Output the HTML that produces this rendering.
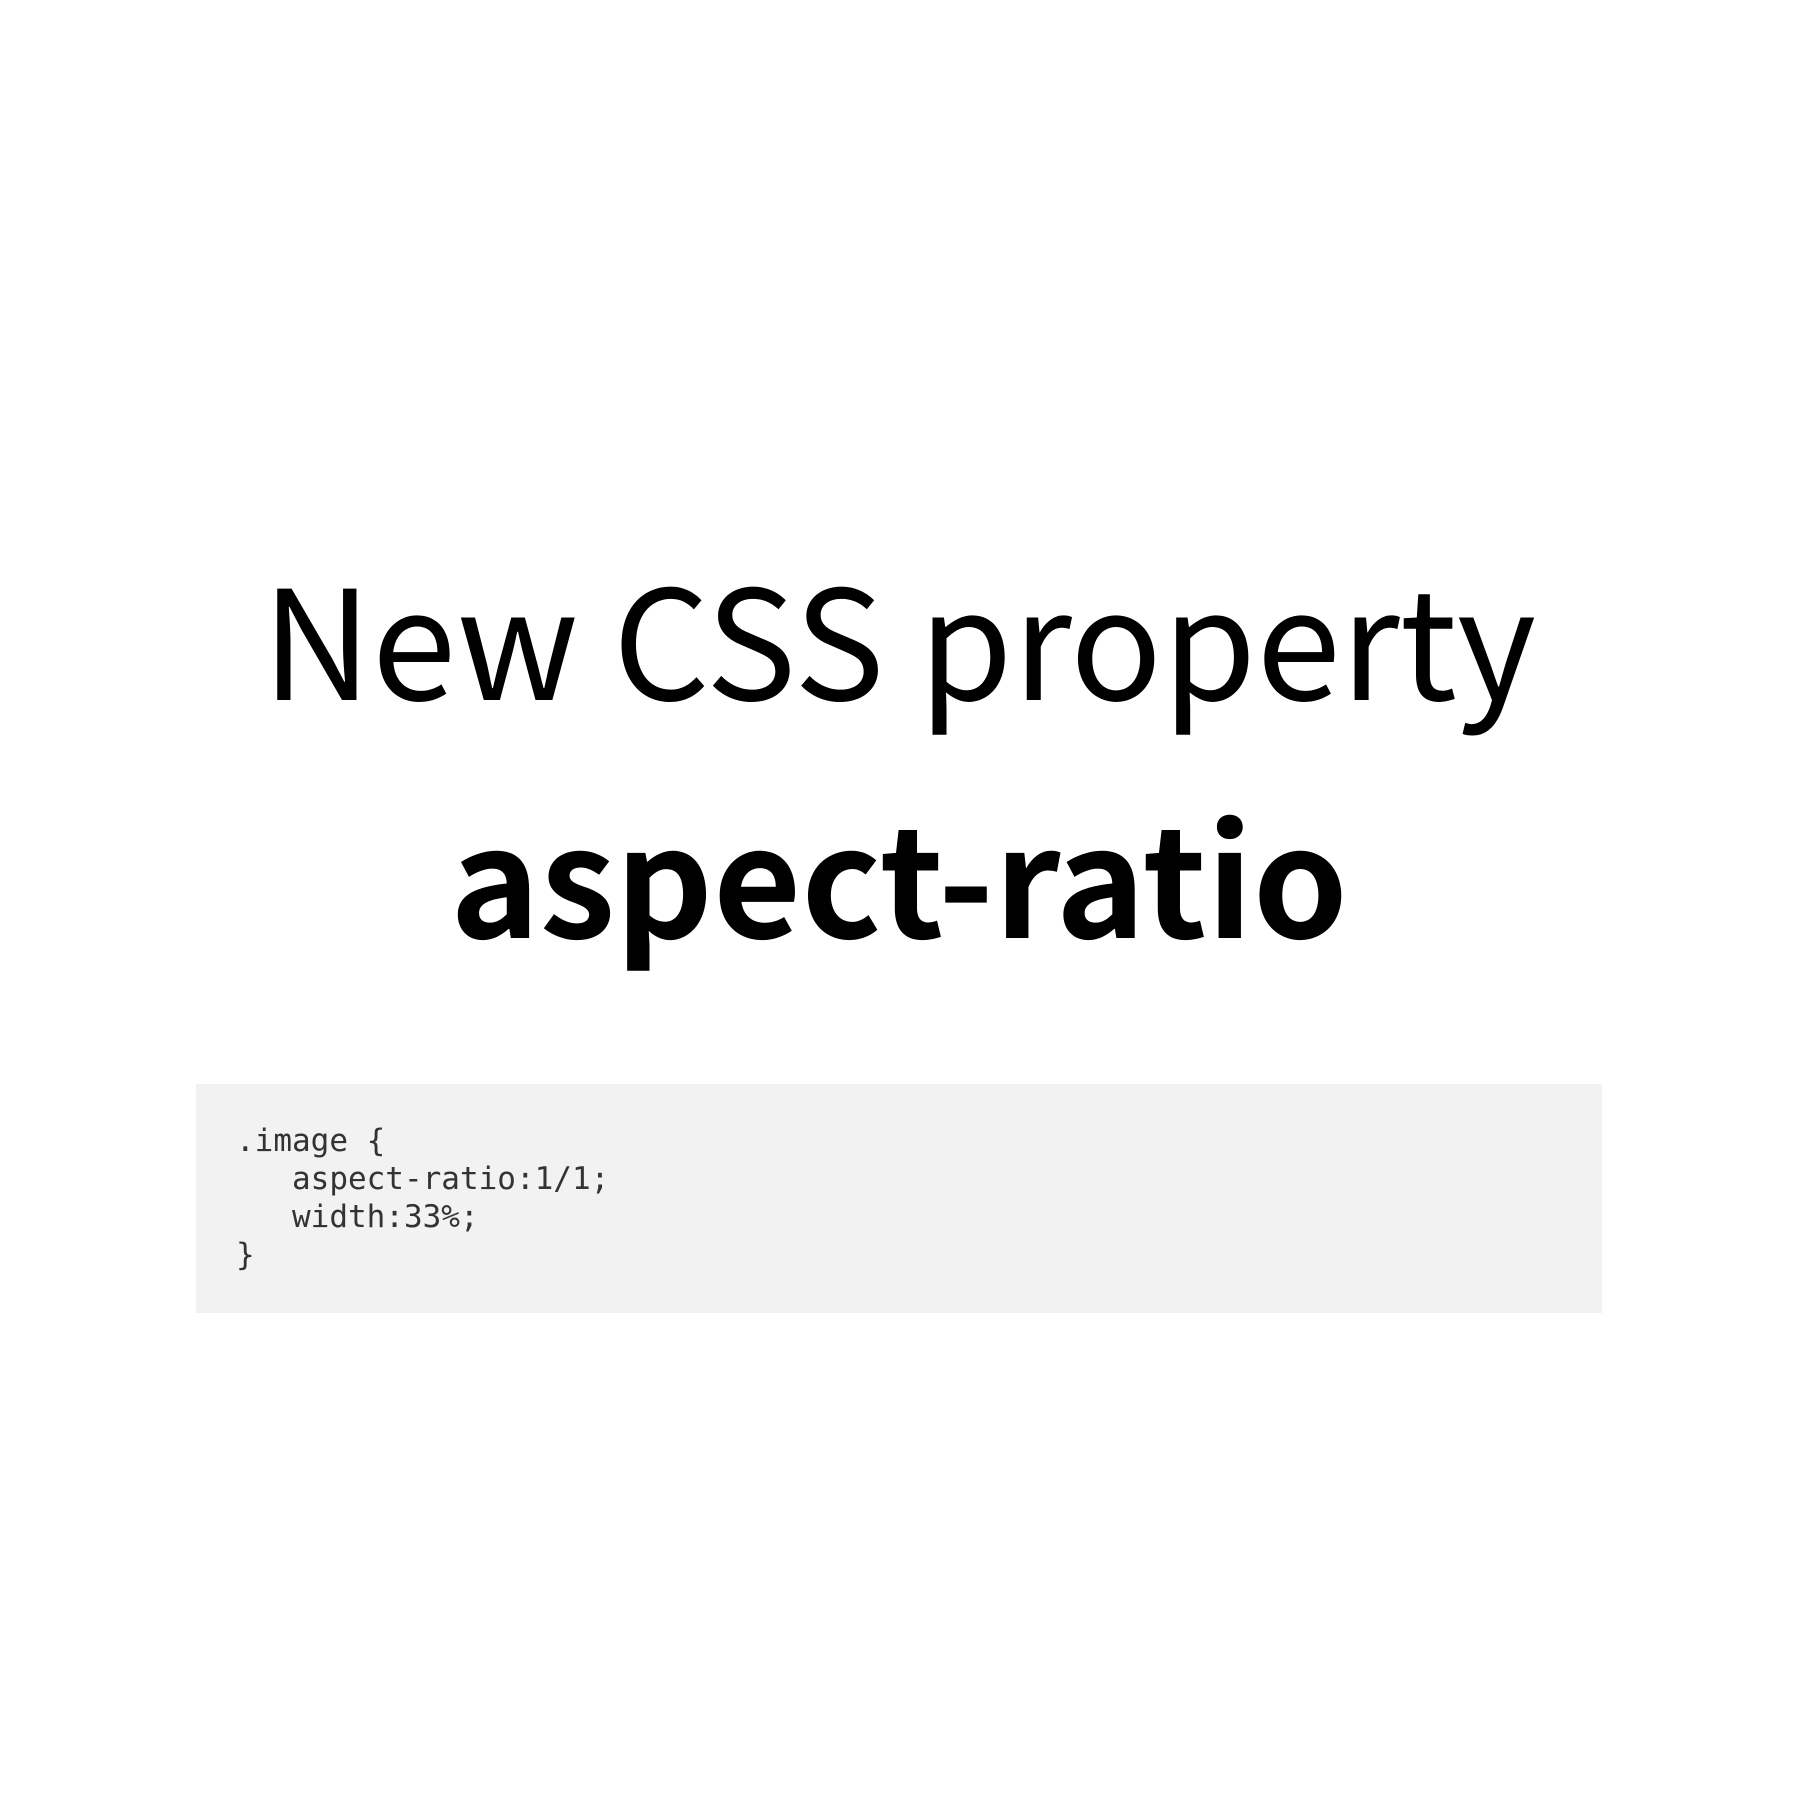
<!DOCTYPE html>
<html><head><meta charset="utf-8"><style>
html,body{margin:0;padding:0;background:#fff;width:1798px;height:1798px;overflow:hidden}
.t{position:absolute;left:0;width:1798px;text-align:center;font-family:"Noto Sans CJK JP","Liberation Sans",sans-serif;color:#000;white-space:nowrap}
.t1{top:539px;font-size:152px;line-height:190px;font-weight:400}
.t2{top:772px;font-size:152px;line-height:200px;font-weight:700}
.code{position:absolute;left:196px;top:1084px;width:1406px;height:229px;background:#f2f2f2}
pre{margin:0;position:absolute;left:236px;top:1122px;font-family:"DejaVu Sans Mono","Liberation Mono",monospace;font-size:31px;line-height:38px;color:#333}
</style></head><body>
<div class="t t1">New CSS property</div>
<div class="t t2">aspect-ratio</div>
<div class="code"></div>
<pre>.image {
   aspect-ratio:1/1;
   width:33%;
}</pre>
</body></html>
